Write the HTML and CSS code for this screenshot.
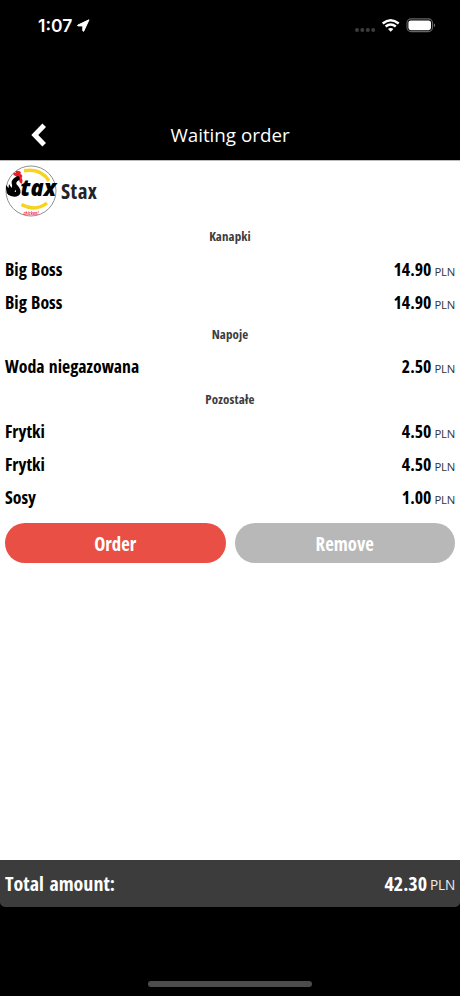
FILE: index.html
```
<!DOCTYPE html>
<html lang="en">
<head>
<meta charset="utf-8">
<title>Waiting order</title>
<link rel="stylesheet" href="styles.css">
</head>
<body>
<div class="status">
  <span class="time">1:07</span>
  <svg class="arrow" width="13" height="13" viewBox="0 0 13 13"><path d="M12 .8 .8 6.1q-.6.6.2.8h4.8v5q.4.9 1 .1z" fill="#fff" stroke="#fff" stroke-width="1" stroke-linejoin="round"/></svg>
  <svg class="signals" width="84" height="18" viewBox="0 0 84 18">
    <g fill="#3c3c3c"><circle cx="4" cy="13" r="2"/><circle cx="9.3" cy="13" r="2"/><circle cx="14.8" cy="13" r="2"/><circle cx="20.2" cy="13" r="2"/></g>
    <g fill="none" stroke="#fff" stroke-width="2.5"><path d="M29.7 6.5q8-6.6 16 0"/><path d="M32.6 9.5q5.1-4 10.2 0"/></g>
    <path d="m37.7 14.7-2.7-2.8q2.7-2 5.4 0z" fill="#fff"/>
    <rect x="54" y="1.9" width="25.5" height="12.7" rx="4" fill="none" stroke="#666" stroke-width="1.1"/>
    <rect x="55.4" y="3.4" width="22.6" height="9.8" rx="2.4" fill="#fff"/>
    <path d="M80.9 6.2q2.4 2 0 4z" fill="#777"/>
  </svg>
</div>
<header class="nav">
  <svg class="back" width="18" height="24" viewBox="0 0 18 24"><path d="M14.2 2.3 4.8 12l9.4 9.7" fill="none" stroke="#fff" stroke-width="5"/></svg>
  <h1 class="title">Waiting order</h1>
</header>
<main class="content">
  <div class="brand">
    <svg class="logo" width="54" height="54" viewBox="0 0 54 54">
      <circle cx="27" cy="27" r="25" fill="#fff" stroke="#909090" stroke-width="1"/>
      <path d="M20 6.800Q37 4 45 17M17.500 40.500Q31 48 43 39" fill="none" stroke="#f7d31c" stroke-width="3.400"/>
      <path d="M9.500 11q-1-3 2-2 0-3 3-2 3 0 2 3 3 1 1 4 2 2 0 6l-2-2-1-4-3-2z" fill="#ee1c25"/>
      <path d="M13.500 14.500Q8.500 17 10.500 21.500 16 27 13.500 29.500 9.500 32 5 28" fill="none" stroke="#000" stroke-width="4.600" stroke-linecap="round"/>
      <path d="m2 21 2.500 3 .5-4 2.500 4 1-3 3 4-2 7-5-1q-3-4-2.500-10z" fill="#000"/>
      <text class="logo-text" x="16.500" y="31.500" textLength="35.500" lengthAdjust="spacingAndGlyphs">tax</text>
      <text class="logo-sub" x="19.500" y="51" textLength="15" lengthAdjust="spacingAndGlyphs">chicken!</text>
    </svg>
    <span class="brand-name">Stax</span>
  </div>
  <h2 class="group">Kanapki</h2>
  <div class="row"><span>Big Boss</span><span class="price">14.90<small>PLN</small></span></div>
  <div class="row"><span>Big Boss</span><span class="price">14.90<small>PLN</small></span></div>
  <h2 class="group">Napoje</h2>
  <div class="row"><span>Woda niegazowana</span><span class="price">2.50<small>PLN</small></span></div>
  <h2 class="group">Pozostałe</h2>
  <div class="row"><span>Frytki</span><span class="price">4.50<small>PLN</small></span></div>
  <div class="row"><span>Frytki</span><span class="price">4.50<small>PLN</small></span></div>
  <div class="row"><span>Sosy</span><span class="price">1.00<small>PLN</small></span></div>
  <div class="actions"><button class="btn order">Order</button><button class="btn remove">Remove</button></div>
</main>
<footer class="total"><span>Total amount:</span><span class="price">42.30<small>PLN</small></span></footer>
<div class="home"></div>
</body>
</html>
```
FILE: styles.css
```
* { box-sizing: border-box; }
body {
  margin: 0;
  height: 996px;
  display: flex;
  flex-direction: column;
  background: #000;
  color: #000;
  font-family: "Open Sans", sans-serif;
  overflow: hidden;
}
.status { height: 110px; padding: 16px 23px 0 38px; display: flex; align-items: flex-start; }
.time { color: #fff; font: 600 17.5px/20px Inter, sans-serif; width: 35px; white-space: nowrap; }
.arrow { margin: 3px 0 0 4px; }
.signals { margin: 1px 0 0 auto; }
.nav { height: 50px; display: grid; grid-template-columns: 50px 1fr 50px; align-items: center; }
.back { margin-left: 30px; }
.title { margin: 0; text-align: center; color: #fff; font-size: 18.8px; font-weight: 400; line-height: 50px; }
.content { height: 700px; background: #fff; border-top: 1px solid #bbb; }
.brand { height: 60.4px; padding: 3px 4px; display: flex; }
.brand-name, .group, .row, .btn, .total { font-weight: 700; font-stretch: 75%; }
.brand-name { color: #212529; font-size: 21px; letter-spacing: .4px; line-height: 30px; margin: 12px 0 0 3px; }
.logo-text { font: italic 800 22px "Open Sans", sans-serif; }
.logo-sub { font: italic 700 5px "Open Sans", sans-serif; fill: #e33; }
.group { margin: 0; height: 31.2px; line-height: 31.2px; font-size: 13px; letter-spacing: .1px; text-align: center; color: #3c3c3c; }
.row { height: 33.3px; padding: 0 5px; display: flex; justify-content: space-between; line-height: 33.3px; font-size: 17.8px; word-spacing: 1px; }
.price small { margin-left: 3px; font-size: 11.3px; font-weight: 400; font-stretch: 100%; letter-spacing: -.2px; color: #333; }
.actions { display: grid; grid-template-columns: 1fr 1fr; gap: 9px; padding: 8px 5px 0; }
.btn { height: 40px; border: 0; border-radius: 20px; padding: 2px 0 0; color: #fff; font-family: inherit; font-size: 18.8px; }
.order { background: #e94f44; }
.remove { background: #b8b8b8; }
.total { height: 47px; padding: 0 5px; display: flex; justify-content: space-between; line-height: 48px; font-size: 20px; word-spacing: 2px; color: #fff; background: #3c3c3c; border-radius: 0 0 5px 5px; }
.total small { font-size: 13.6px; color: #eee; position: relative; top: -1px; }
.home { width: 164px; height: 6px; margin: 74px auto 0; border-radius: 3px; background: #4c4c4c; }
```
